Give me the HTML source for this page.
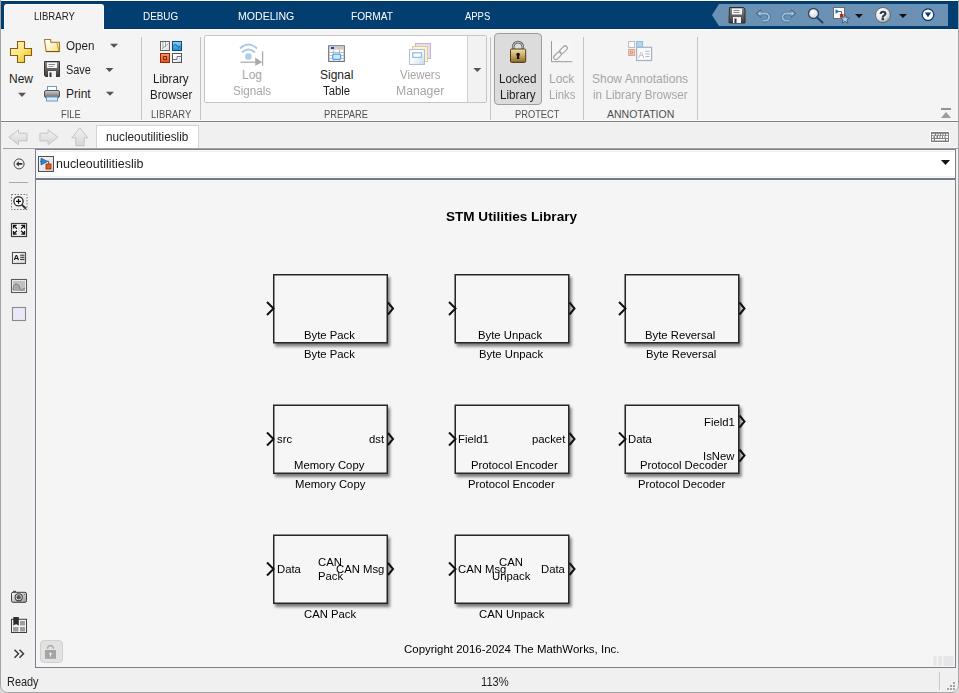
<!DOCTYPE html>
<html><head><meta charset="utf-8">
<style>
*{margin:0;padding:0;box-sizing:border-box}
html,body{width:959px;height:693px;overflow:hidden;background:#f0f0f0;font-family:"Liberation Sans",sans-serif}
.a{position:absolute}
.t{position:absolute;white-space:nowrap;line-height:1;transform-origin:0 0}
.tab{color:#fff;font-size:11px}
.rb{font-size:12px;color:#1e1e1e}
.dis{color:#a6a6a6}
.grp{font-size:10.5px;color:#505050}
.sep{position:absolute;width:1px;background:#c4c4c4;top:37px;height:84px}
svg{position:absolute;overflow:visible}
</style></head><body>
<!-- window top strip -->
<div class="a" style="left:0;top:0;width:959px;height:1px;background:#fbfaf4"></div>
<!-- blue header -->
<div class="a" style="left:1px;top:1px;width:957px;height:28px;background:#023f70;border-top:1px solid #013468;border-bottom:1px solid #013468"></div>
<div class="a" style="left:1px;top:29px;width:957px;height:1px;background:#fdfdfd"></div>
<!-- LIBRARY tab -->
<div class="a" style="left:4px;top:4px;width:100px;height:27px;background:#f4f4f4;border:1px solid #fdfdfd;border-bottom:none;border-radius:3px 3px 0 0"></div>
<div class="t tab" style="left:34px;top:11px;color:#222;transform:scaleX(0.87)">LIBRARY</div>
<div class="t tab" style="left:143px;top:11px;transform:scaleX(0.9)">DEBUG</div>
<div class="t tab" style="left:238px;top:11px;transform:scaleX(0.96)">MODELING</div>
<div class="t tab" style="left:351px;top:11px;transform:scaleX(0.92)">FORMAT</div>
<div class="t tab" style="left:465px;top:11px;transform:scaleX(0.86)">APPS</div>
<!-- QAT -->
<svg style="left:0;top:0" width="959" height="30">
<polygon points="712,15 719,4 948,4 948,26 719,26" fill="#6b91b4"/>
</svg>

<!-- ribbon body -->
<div class="a" style="left:1px;top:30px;width:957px;height:91px;background:#f4f4f4"></div>
<div class="a" style="left:1px;top:121px;width:957px;height:1px;background:#808080"></div>
<div class="sep" style="left:141px"></div>
<div class="sep" style="left:200px"></div>
<div class="sep" style="left:490px"></div>
<div class="sep" style="left:583px"></div>
<div class="sep" style="left:697px"></div>

<!-- FILE -->
<div class="t rb" style="left:9px;top:73px">New</div>
<div class="t rb" style="left:66px;top:40px;transform:scaleX(0.97)">Open</div>
<div class="t rb" style="left:66px;top:64px;transform:scaleX(0.91)">Save</div>
<div class="t rb" style="left:66px;top:88px">Print</div>
<div class="t grp" style="left:61px;top:109px;transform:scaleX(0.89)">FILE</div>
<!-- LIBRARY -->
<div class="t rb" style="left:153px;top:73px;transform:scaleX(0.97)">Library</div>
<div class="t rb" style="left:150px;top:89px;transform:scaleX(0.96)">Browser</div>
<div class="t grp" style="left:151px;top:109px;transform:scaleX(0.9)">LIBRARY</div>
<!-- PREPARE gallery -->
<div class="a" style="left:204px;top:35px;width:283px;height:68px;background:#fff;border:1px solid #c6c6c6;border-radius:2px"></div>
<div class="a" style="left:467px;top:36px;width:19px;height:66px;background:#f2f2f2;border-left:1px solid #d0d0d0"></div>
<div class="t rb dis" style="left:242px;top:69px">Log</div>
<div class="t rb dis" style="left:233px;top:85px;transform:scaleX(0.97)">Signals</div>
<div class="t rb" style="left:320px;top:69px">Signal</div>
<div class="t rb" style="left:323px;top:85px;transform:scaleX(0.94)">Table</div>
<div class="t rb dis" style="left:400px;top:69px;transform:scaleX(0.95)">Viewers</div>
<div class="t rb dis" style="left:396px;top:85px;transform:scaleX(1.02)">Manager</div>
<div class="t grp" style="left:324px;top:109px;transform:scaleX(0.89)">PREPARE</div>
<!-- PROTECT -->
<div class="a" style="left:494px;top:33px;width:48px;height:72px;background:#dcdcdc;border:1px solid #9e9e9e;border-radius:4px"></div>
<div class="t rb" style="left:499px;top:73px;transform:scaleX(0.97)">Locked</div>
<div class="t rb" style="left:500px;top:89px;transform:scaleX(0.97)">Library</div>
<div class="t rb dis" style="left:549px;top:73px">Lock</div>
<div class="t rb dis" style="left:549px;top:89px;transform:scaleX(0.94)">Links</div>
<div class="t grp" style="left:515px;top:109px;transform:scaleX(0.885)">PROTECT</div>
<!-- ANNOTATION -->
<div class="t rb dis" style="left:592px;top:73px">Show Annotations</div>
<div class="t rb dis" style="left:593px;top:89px;transform:scaleX(0.98)">in Library Browser</div>
<div class="t grp" style="left:607px;top:109px">ANNOTATION</div>

<!-- tab strip -->
<div class="a" style="left:1px;top:122px;width:957px;height:26px;background:#f0f0f0"></div>
<div class="a" style="left:1px;top:122px;width:957px;height:1px;background:#f7f7f7"></div>
<div class="a" style="left:1px;top:120px;width:957px;height:1px;background:#fbfbfb"></div>
<div class="a" style="left:1px;top:147px;width:957px;height:1px;background:#f5f5f5"></div>
<div class="a" style="left:96px;top:125px;width:103px;height:24px;background:#fff;border:1px solid #d4d4d4;border-bottom:none"></div>
<div class="t rb" style="left:106px;top:131px;color:#222;transform:scaleX(0.98)">nucleoutilitieslib</div>
<div class="a" style="left:3px;top:148px;width:955px;height:1px;background:#a0a0a0"></div>

<!-- address bar -->
<div class="a" style="left:35px;top:149px;width:921px;height:1px;background:#7a808c"></div>
<div class="a" style="left:36px;top:150px;width:919px;height:28px;background:#fff;border-top:1px solid #f9f9f9;border-left:1px solid #f9f9f9"></div>
<div class="a" style="left:37px;top:151px;width:917px;height:1px;background:#f0f0f0"></div>
<div class="a" style="left:37px;top:151px;width:1px;height:26px;background:#f0f0f0"></div>
<div class="a" style="left:37px;top:176px;width:917px;height:1px;background:#f0f0f0"></div>
<div class="a" style="left:37px;top:177px;width:917px;height:1px;background:#f8f8f8"></div>
<div class="a" style="left:36px;top:178px;width:919px;height:2px;background:#737a88"></div>
<div class="t rb" style="left:56px;top:158px;color:#222;transform:scaleX(1.04)">nucleoutilitieslib</div>

<!-- palette -->
<div class="a" style="left:35px;top:149px;width:1px;height:519px;background:#7a808c"></div>
<!-- canvas -->
<div class="a" style="left:36px;top:180px;width:919px;height:487px;background:#f5f5f5"></div>
<div class="a" style="left:955px;top:149px;width:1px;height:519px;background:#7a808c"></div>
<div class="a" style="left:35px;top:667px;width:921px;height:1px;background:#7a808c"></div>


<svg style="left:0;top:0" width="959" height="693">
<defs>
<filter id="sh" x="-10%" y="-10%" width="130%" height="140%">
<feGaussianBlur in="SourceAlpha" stdDeviation="1.7"/>
<feOffset dx="2.2" dy="2.8" result="o"/>
<feComponentTransfer><feFuncA type="linear" slope="0.5"/></feComponentTransfer>
<feMerge><feMergeNode/><feMergeNode in="SourceGraphic"/></feMerge>
</filter>
</defs>
<g fill="#f6f6f6" stroke="#262626" stroke-width="1.5" filter="url(#sh)">
<rect x="273.75" y="274.75" width="113.5" height="68"/>
<rect x="455.25" y="274.75" width="113.5" height="68"/>
<rect x="625.25" y="274.75" width="113.5" height="68"/>
<rect x="273.75" y="405.25" width="113.5" height="68"/>
<rect x="455.25" y="405.25" width="113.5" height="68"/>
<rect x="625.25" y="405.25" width="113.5" height="68"/>
<rect x="273.75" y="535.25" width="113.5" height="68"/>
<rect x="455.25" y="535.25" width="113.5" height="68"/>
</g>
<g fill="none" stroke="#111" stroke-width="2" stroke-linejoin="miter">
<polyline points="267,302 273.5,308.5 267,315"/>
<polyline points="388.0,302.5 393.0,308.5 388.0,314.5"/>
<polyline points="449,302 455.5,308.5 449,315"/>
<polyline points="569.5,302.5 574.5,308.5 569.5,314.5"/>
<polyline points="619,302 625.5,308.5 619,315"/>
<polyline points="739.5,302.5 744.5,308.5 739.5,314.5"/>
<polyline points="267,432.5 273.5,439 267,445.5"/>
<polyline points="388.0,433.0 393.0,439.0 388.0,445.0"/>
<polyline points="449,432.5 455.5,439 449,445.5"/>
<polyline points="569.5,433.0 574.5,439.0 569.5,445.0"/>
<polyline points="619,432.5 625.5,439 619,445.5"/>
<polyline points="739.5,415.5 744.5,421.5 739.5,427.5"/>
<polyline points="739.5,449.5 744.5,455.5 739.5,461.5"/>
<polyline points="267,562.5 273.5,569 267,575.5"/>
<polyline points="388.0,563.0 393.0,569.0 388.0,575.0"/>
<polyline points="449,562.5 455.5,569 449,575.5"/>
<polyline points="569.5,563.0 574.5,569.0 569.5,575.0"/>
</g>
</svg>
<div style="position:absolute;left:0;top:0;width:959px;height:693px;font-size:11.3px;color:#000;will-change:transform">
<div class="t" style="left:446px;top:210px;font-size:13.56px;font-weight:bold;color:#000">STM Utilities Library</div>
<div class="t" style="left:304px;top:330px">Byte Pack</div>
<div class="t" style="left:304px;top:349px">Byte Pack</div>
<div class="t" style="left:478px;top:330px">Byte Unpack</div>
<div class="t" style="left:479px;top:349px">Byte Unpack</div>
<div class="t" style="left:645px;top:330px">Byte Reversal</div>
<div class="t" style="left:646px;top:349px">Byte Reversal</div>

<div class="t" style="left:277px;top:434px">src</div>
<div class="t" style="left:369px;top:434px">dst</div>
<div class="t" style="left:294px;top:460px">Memory Copy</div>
<div class="t" style="left:295px;top:479px">Memory Copy</div>
<div class="t" style="left:458px;top:434px">Field1</div>
<div class="t" style="left:532px;top:434px">packet</div>
<div class="t" style="left:471px;top:460px">Protocol Encoder</div>
<div class="t" style="left:468px;top:479px">Protocol Encoder</div>
<div class="t" style="left:628px;top:434px">Data</div>
<div class="t" style="left:704px;top:417px">Field1</div>
<div class="t" style="left:703px;top:451px">IsNew</div>
<div class="t" style="left:640px;top:460px">Protocol Decoder</div>
<div class="t" style="left:638px;top:479px">Protocol Decoder</div>

<div class="t" style="left:277px;top:564px">Data</div>
<div class="t" style="left:318px;top:557px">CAN</div>
<div class="t" style="left:318px;top:571px">Pack</div>
<div class="t" style="left:336px;top:564px">CAN Msg</div>
<div class="t" style="left:304px;top:609px">CAN Pack</div>
<div class="t" style="left:458px;top:564px">CAN Msg</div>
<div class="t" style="left:499px;top:557px">CAN</div>
<div class="t" style="left:492px;top:571px">Unpack</div>
<div class="t" style="left:541px;top:564px">Data</div>
<div class="t" style="left:479px;top:609px">CAN Unpack</div>

<div class="t" style="left:404px;top:644px;transform:scaleX(1.014)">Copyright 2016-2024 The MathWorks, Inc.</div>
</div>


<!-- ===== ICONS ===== -->
<svg style="left:0;top:0" width="959" height="693">
<defs>
<linearGradient id="gPlus" x1="0" y1="0" x2="1" y2="1"><stop offset="0" stop-color="#fffbe0"/><stop offset="0.5" stop-color="#fde676"/><stop offset="1" stop-color="#e8b420"/></linearGradient>
<linearGradient id="gFold" x1="0" y1="0" x2="1" y2="1"><stop offset="0.2" stop-color="#ffffff"/><stop offset="1" stop-color="#f6e070"/></linearGradient>
<linearGradient id="gDisk" x1="0" y1="0" x2="0" y2="1"><stop offset="0" stop-color="#8a8a8a"/><stop offset="1" stop-color="#3a3a3a"/></linearGradient>
<linearGradient id="gPrn" x1="0" y1="0" x2="0" y2="1"><stop offset="0" stop-color="#d0d0d0"/><stop offset="1" stop-color="#6a6a6a"/></linearGradient>
<linearGradient id="gBlue" x1="0" y1="0" x2="0" y2="1"><stop offset="0" stop-color="#8fd4f4"/><stop offset="1" stop-color="#1e88c8"/></linearGradient>
<linearGradient id="gOra" x1="0" y1="0" x2="0" y2="1"><stop offset="0" stop-color="#f29a6a"/><stop offset="1" stop-color="#e2501a"/></linearGradient>
<linearGradient id="gWh" x1="0" y1="0" x2="1" y2="1"><stop offset="0.4" stop-color="#ffffff"/><stop offset="1" stop-color="#c8d8e8"/></linearGradient>
<linearGradient id="gGold" x1="0" y1="0" x2="0" y2="1"><stop offset="0" stop-color="#efe0b0"/><stop offset="0.5" stop-color="#c8a860"/><stop offset="1" stop-color="#8a6a28"/></linearGradient>
<linearGradient id="gArr" x1="0" y1="0" x2="0" y2="1"><stop offset="0" stop-color="#f2f2f2"/><stop offset="1" stop-color="#d6d6d6"/></linearGradient>
<radialGradient id="gHelp" cx="0.35" cy="0.3" r="0.8"><stop offset="0" stop-color="#ffffff"/><stop offset="0.6" stop-color="#e6e6e6"/><stop offset="1" stop-color="#9a9a9a"/></radialGradient>
<radialGradient id="gMag" cx="0.4" cy="0.35" r="0.7"><stop offset="0" stop-color="#ffffff"/><stop offset="1" stop-color="#c8d4de"/></radialGradient>
<linearGradient id="gLib" x1="0" y1="0" x2="1" y2="1"><stop offset="0" stop-color="#ffffff"/><stop offset="1" stop-color="#d4d4d4"/></linearGradient>
</defs>

<!-- QAT icons -->
<g>
<path d="M729.5,7.5 h14 l1.5,1.5 v14 h-15.5 l-0.5,-0.5 z" fill="url(#gDisk)" stroke="#2e2e2e" stroke-width="1"/>
<rect x="732" y="8.5" width="10" height="6" fill="#f4f4f4"/>
<rect x="733.5" y="10" width="6" height="1" fill="#888"/><rect x="733.5" y="12" width="6" height="1" fill="#888"/>
<rect x="733" y="17" width="8" height="6" fill="#f2f2f2"/><rect x="734.5" y="18.5" width="2" height="4.5" fill="#333"/>
</g>
<g fill="none" stroke-linecap="butt">
<path d="M759,13.5 h6.5 a3.6,3.6 0 0 1 0,7.2 h-3" stroke="#4a6f92" stroke-width="3.4"/>
<path d="M792.5,13.5 h-6.5 a3.6,3.6 0 0 0 0,7.2 h3" stroke="#4a6f92" stroke-width="3.4"/>
<path d="M756.5,13.5 l4.2,-3.6 v7.2 z M795.5,13.5 l-4.2,-3.6 v7.2 z" fill="#4a6f92" stroke="#4a6f92" stroke-width="1.2" stroke-linejoin="round"/>
<path d="M759,13.5 h6.5 a3.6,3.6 0 0 1 0,7.2 h-3" stroke="#9cc0dc" stroke-width="1.8"/>
<path d="M792.5,13.5 h-6.5 a3.6,3.6 0 0 0 0,7.2 h3" stroke="#9cc0dc" stroke-width="1.8"/>
<path d="M757.5,13.5 l3,-2.6 v5.2 z M794.5,13.5 l-3,-2.6 v5.2 z" fill="#a8c8e2"/>
</g>
<g>
<circle cx="813.5" cy="13.5" r="5" fill="url(#gMag)" stroke="#3a4a58" stroke-width="1.4"/>
<path d="M817,17.5 l5.5,5" stroke="#27476a" stroke-width="2.2" stroke-linecap="round"/>
</g>
<g>
<rect x="833.5" y="7.5" width="11" height="11" fill="#fbfbfb" stroke="#6c6c6c" stroke-width="1"/>
<path d="M839,11.5 h2.5 v3" stroke="#333" stroke-width="0.8" fill="none"/>
<path d="M835.5,9.2 l4,2.3 l-4,2.3 z" fill="#1a6ec8"/>
<rect x="840" y="14" width="3.5" height="3.5" fill="#c02a0a"/>
<path d="M845,14.8 l1.3,3 l3.2,0.2 l-2.5,2 l0.9,3.1 l-2.9,-1.7 l-2.9,1.7 l0.9,-3.1 l-2.5,-2 l3.2,-0.2 z" fill="#a8cce8" stroke="#3e5a78" stroke-width="0.9"/>
</g>
<path d="M855,14 h8 l-4,4 z" fill="#111"/>
<g>
<circle cx="883" cy="15" r="7.5" fill="url(#gHelp)" stroke="#4a5a6a" stroke-width="0.8"/>
<text x="883" y="19.6" font-family="Liberation Sans" font-weight="bold" font-size="12.5" text-anchor="middle" fill="#1c2c46" stroke="#1c2c46" stroke-width="0.5">?</text>
</g>
<path d="M899,14 h8 l-4,4 z" fill="#111"/>
<g>
<circle cx="928" cy="14.7" r="5.8" fill="#fff" stroke="#0c3e6e" stroke-width="1.3"/>
<path d="M924.8,12.6 h6.4 l-3.2,4.6 z" fill="#0c3e6e"/>
</g>

<!-- New plus -->
<path d="M17.5,41.5 h7 v7 h7 v7 h-7 v7 h-7 v-7 h-7 v-7 h7 z" fill="url(#gPlus)" stroke="#86600e" stroke-width="1.1"/>
<path d="M18,92.8 h8 l-4,4.2 z" fill="#5a5a5a"/>
<!-- folder -->
<path d="M44.5,39.5 h6.2 v2.8 h8.8 v9.2 h-13.4 z" fill="url(#gFold)" stroke="#a87a22" stroke-width="1.1" stroke-linejoin="round"/>
<path d="M51,42.6 h5.8 l2.2,8.6" fill="none" stroke="#c09040" stroke-width="0.9"/>
<path d="M46,51.6 h13.4" stroke="#6e5010" stroke-width="1"/>
<!-- save -->
<path d="M44.5,61.5 h15 v15 h-14 l-1,-1 z" fill="url(#gDisk)" stroke="#333" stroke-width="1"/>
<rect x="47" y="62.5" width="10" height="5.5" fill="#f6f6f6"/>
<rect x="48.5" y="64" width="6.5" height="1" fill="#8a8a8a"/><rect x="48.5" y="66" width="5" height="0.8" fill="#8a8a8a"/>
<rect x="48" y="71" width="8" height="6" fill="#f0f0f0"/><rect x="49.5" y="72.5" width="2" height="4.5" fill="#333"/>
<!-- print -->
<rect x="47.5" y="86.5" width="9" height="4" fill="#fff" stroke="#6a9ac8" stroke-width="1"/>
<rect x="44.5" y="90.5" width="15" height="7" rx="1.5" fill="url(#gPrn)" stroke="#555" stroke-width="1"/>
<rect x="46.5" y="97" width="11" height="4" fill="#d8ecf8" stroke="#6a9ac8" stroke-width="1"/>
<!-- small arrows -->
<path d="M110,43.8 h8 l-4,4 z" fill="#555"/>
<path d="M105.5,68 h8 l-4,4 z" fill="#555"/>
<path d="M106,91.7 h8 l-4,4 z" fill="#555"/>

<!-- Library browser -->
<rect x="160.5" y="41.5" width="9" height="9" fill="url(#gWh)" stroke="#666" stroke-width="1"/>
<path d="M162,49 l6.5,-5.5 M163,42 v6 M165.5,42 v4.5" stroke="#888" stroke-width="0.8" fill="none"/>
<rect x="172.5" y="41.5" width="9" height="9" fill="url(#gBlue)" stroke="#0a4a8a" stroke-width="1"/>
<path d="M173.5,46 q2,-3 3.5,0 t3.5,0" stroke="#0a5a9a" stroke-width="1" fill="none"/>
<rect x="160.5" y="53.5" width="9" height="9" fill="url(#gOra)" stroke="#8a2a08" stroke-width="1"/>
<rect x="163.5" y="56.5" width="3" height="3" fill="none" stroke="#8a2a08" stroke-width="1"/>
<rect x="172.5" y="53.5" width="9" height="9" fill="url(#gWh)" stroke="#555" stroke-width="1"/>
<path d="M173,59.5 h4 v-3 h4.5" stroke="#777" stroke-width="1" fill="none"/>

<!-- Log signals -->
<g fill="none" stroke="#a9c9e6" stroke-width="1.8" stroke-linecap="round">
<path d="M240.5,48 q8,-7 16,0"/>
<path d="M242.5,52 q6,-5 12,0"/>
</g>
<circle cx="248.4" cy="56.5" r="3.3" fill="#b0cce6"/>
<path d="M240.5,62.2 h15" stroke="#a8a8a8" stroke-width="1.2"/>
<path d="M255.2,57.4 l7,4.8 l-7,3.6 z" fill="#a8a8a8"/>
<path d="M262.6,51.2 v14.6" stroke="#a8a8a8" stroke-width="1.2"/>

<!-- Signal table -->
<rect x="328.7" y="45.8" width="15.6" height="15.6" fill="#fff" stroke="#6a6a6a" stroke-width="1.1"/>
<rect x="329.3" y="46.4" width="14.4" height="3.2" fill="#c8c8c8"/>
<rect x="331" y="47" width="3" height="2" fill="#0a50b0"/>
<path d="M329,52.4 h15 M329,55.4 h15 M329,58.4 h15" stroke="#aaa" stroke-width="0.8"/>
<path d="M333.4,49.6 v11.5 M339.5,49.6 v11.5" stroke="#aaa" stroke-width="0.8"/>
<rect x="332.8" y="54.2" width="7.8" height="5.2" rx="1" fill="#d4e8fc" stroke="#4aa0ff" stroke-width="1.2"/>

<!-- Viewers manager -->
<rect x="415.5" y="43.5" width="15" height="15" fill="#e6def0" stroke="#c4b4dc" stroke-width="1"/>
<rect x="412.5" y="46.5" width="15" height="15" fill="#fdf1d0" stroke="#e4cc9c" stroke-width="1"/>
<rect x="409.5" y="49.5" width="15" height="15" fill="url(#gWh)" stroke="#a8c0d8" stroke-width="1"/>
<rect x="412.8" y="52.8" width="8.6" height="4.6" fill="#fff" stroke="#8ec0e8" stroke-width="1.3"/>
<path d="M473.3,68 h8 l-4,4 z" fill="#555"/>

<!-- Lock -->
<path d="M513.2,49.5 v-2.6 a4.8,4.8 0 0 1 9.6,0 v2.6" fill="none" stroke="#5e5e5e" stroke-width="2.6"/>
<path d="M513.2,49.5 v-2.6 a4.8,4.8 0 0 1 9.6,0 v2.6" fill="none" stroke="#e4e4e4" stroke-width="0.8"/>
<rect x="510.5" y="49" width="15.2" height="13.4" rx="1.2" fill="url(#gGold)" stroke="#4e3a10" stroke-width="1"/>
<circle cx="518.1" cy="54.6" r="1.8" fill="#111"/>
<path d="M517.2,55 h1.8 l0.4,4 h-2.6 z" fill="#111"/>
<!-- link -->
<rect x="552" y="41.5" width="20" height="20" fill="#f6f6f6"/>
<path d="M551.5,41.2 v20.5 h20.8" fill="none" stroke="#9a9a9a" stroke-width="1"/>
<g fill="none" stroke="#a8a8a8" stroke-width="1.2">
<rect x="553" y="53.5" width="9" height="4.4" rx="2.2" transform="rotate(-45 557.5 55.7)"/>
<rect x="559" y="47.5" width="9" height="4.4" rx="2.2" transform="rotate(-45 563.5 49.7)"/>
</g>

<!-- Annotation icon -->
<rect x="628.6" y="41.5" width="6" height="6" fill="#fafafa" stroke="#bcbcbc" stroke-width="1"/>
<rect x="636.6" y="41.5" width="6" height="6" fill="#aad8ee" stroke="#8ebedc" stroke-width="1"/>
<rect x="628.6" y="49.5" width="6" height="6" fill="#f4c4b0" stroke="#d8a890" stroke-width="1"/>
<rect x="630.6" y="51.5" width="2" height="2" fill="none" stroke="#d09880" stroke-width="0.8"/>
<rect x="636.6" y="47.3" width="15" height="13.2" fill="#fbfbfb" stroke="#a4b0c4" stroke-width="1.2"/>
<text x="638.3" y="57.5" font-family="Liberation Sans" font-size="9" fill="#b8a0b8">A</text>
<path d="M645.5,51.3 h4 M645.5,54 h4 M645.5,56.6 h4" stroke="#a8b4c8" stroke-width="1"/>

<!-- collapse ribbon -->
<rect x="941" y="108" width="10" height="2" fill="#949494"/>
<path d="M941,118 l5,-6 l5,6 z" fill="#9c9c9c"/>

<!-- nav arrows -->
<path d="M8.9,137.1 l9.6,-7.3 v3.4 h8.5 v7.7 h-8.5 v3.9 z" fill="url(#gArr)" stroke="#c4c4c4" stroke-width="1"/>
<path d="M57.9,137.1 l-9.8,-7.3 v3.4 h-8.2 v7.7 h8.2 v3.9 z" fill="url(#gArr)" stroke="#c4c4c4" stroke-width="1"/>
<path d="M79.8,127.9 l8.2,10 h-3.8 v7.9 h-8.4 v-7.9 h-4.1 z" fill="url(#gArr)" stroke="#c4c4c4" stroke-width="1"/>
<!-- keyboard -->
<rect x="930" y="131" width="20" height="12" fill="#fff"/>
<rect x="931" y="132" width="18" height="10" fill="#7e7e7e"/>
<g fill="#fbfbfb">
<rect x="932" y="133.8" width="2.8" height="1.5"/><rect x="936" y="133.8" width="1.5" height="1.5"/><rect x="938.5" y="133.8" width="1.5" height="1.5"/><rect x="941" y="133.8" width="1.5" height="1.5"/><rect x="943.5" y="133.8" width="1.5" height="1.5"/><rect x="946" y="133.8" width="2" height="1.5"/>
<rect x="932" y="136" width="1.5" height="2"/><rect x="935" y="136" width="1.5" height="2"/><rect x="938" y="136" width="1.5" height="2"/><rect x="940.5" y="136" width="1.5" height="2"/><rect x="943" y="136" width="1.5" height="2"/><rect x="945.5" y="136" width="2.5" height="2"/>
<rect x="932" y="139" width="2" height="1.5"/><rect x="935" y="139" width="10" height="1.5"/><rect x="946" y="139" width="2" height="1.5"/>
</g>
<!-- address dropdown -->
<path d="M941,160 h9 l-4.5,5 z" fill="#111"/>

<!-- address library icon -->
<rect x="38.5" y="156.5" width="15" height="15" fill="url(#gLib)" stroke="#505050" stroke-width="1"/>
<path d="M40,161.3 h1.5 M47,161.3 h1.7 v3" stroke="#444" stroke-width="0.9" fill="none"/>
<path d="M41,158 l6.5,3.4 l-6.5,3.6 z" fill="#2a88d0" stroke="#1858a0" stroke-width="0.7"/>
<rect x="46" y="164" width="5" height="5" fill="#e45a20" stroke="#8a2a08" stroke-width="0.8"/>

<!-- palette -->
<circle cx="19.1" cy="163.9" r="5" fill="none" stroke="#444" stroke-width="1"/>
<path d="M16,163.9 l2.8,-2.6 v1.8 h3.6 v1.6 h-3.6 v1.8 z" fill="#333"/>
<path d="M9,182.5 h19" stroke="#a8a8a8" stroke-width="1"/>
<rect x="11.5" y="194.5" width="15.5" height="15" fill="none" stroke="#555" stroke-width="0.8" stroke-dasharray="1.5 1.5"/>
<circle cx="18.5" cy="201.3" r="4.6" fill="#fff" stroke="#333" stroke-width="1.4"/>
<path d="M21.8,204.6 l4.2,4.2" stroke="#333" stroke-width="2"/>
<path d="M16,201.3 h5 M18.5,198.8 v5" stroke="#000" stroke-width="1.2"/>
<rect x="11.5" y="223.5" width="15" height="13" fill="#fafafa" stroke="#3c3c3c" stroke-width="1.2"/>
<rect x="18" y="224.5" width="2.5" height="11" fill="#e6e6e6"/>
<path d="M13.5,228.6 v-3.2 h3.2 M13.5,225.4 l3.4,3.4 M24.5,228.6 v-3.2 h-3.2 M24.5,225.4 l-3.4,3.4 M13.5,231 v3.2 h3.2 M13.5,234.2 l3.4,-3.4 M24.5,231 v3.2 h-3.2 M24.5,234.2 l-3.4,-3.4" stroke="#141414" stroke-width="1.3" fill="none"/>
<rect x="12.5" y="252.5" width="13" height="11" fill="url(#gLib)" stroke="#505050" stroke-width="1.1"/>
<text x="13.4" y="260.2" font-family="Liberation Sans" font-weight="bold" font-size="8" fill="#111">A</text>
<path d="M20.2,255.2 h4.2 M20.2,257.3 h4.2 M20.2,259.4 h4.2" stroke="#2a2a2a" stroke-width="1"/>
<rect x="11.5" y="279.5" width="15" height="13" fill="#f4f4f4" stroke="#5a5a5a" stroke-width="1.1"/>
<rect x="13" y="281" width="12" height="10" fill="#c0c0c0"/>
<path d="M13,290 q0,-6 3.3,-6 q3,0 4,5 q0.8,2.5 2,1 q1,-2 2.7,-2 v2.8 h-12 z" fill="#a8a8a8"/>
<path d="M13,290 q0,-6 3.3,-6 q3,0 4,5 q0.8,2.5 2,1 q1,-2 2.7,-2" fill="none" stroke="#777" stroke-width="0.9"/>
<rect x="12.5" y="307.5" width="13" height="13" fill="#e8e8f8" stroke="#8a8a8a" stroke-width="1.1"/>
<!-- camera -->
<defs><linearGradient id="gCam" x1="0" y1="0" x2="1" y2="1"><stop offset="0" stop-color="#fafafa"/><stop offset="1" stop-color="#9a9a9a"/></linearGradient></defs>
<rect x="13" y="590.8" width="3" height="1.6" fill="#555"/>
<rect x="11.5" y="592.3" width="15" height="10" rx="1.5" fill="url(#gCam)" stroke="#3e3e3e" stroke-width="1"/>
<circle cx="18.7" cy="597.3" r="3.6" fill="#e8e8e8" stroke="#3a3a3a" stroke-width="1.1"/>
<circle cx="18.7" cy="597.3" r="2.2" fill="#555"/>
<circle cx="24.3" cy="594.5" r="0.6" fill="#555"/>
<!-- property icon -->
<rect x="11.5" y="619.3" width="15" height="13.2" fill="#f4f4f4" stroke="#3e3e3e" stroke-width="1"/>
<rect x="20" y="621" width="5" height="4.5" fill="#9e9e9e"/><rect x="20" y="627" width="5" height="4.5" fill="#9e9e9e"/>
<rect x="13" y="627" width="5.5" height="4.5" fill="#9e9e9e"/>
<path d="M13.3,617 h5.5 v8.8 q-2.75,-3 -5.5,0 z" fill="#2e2e2e"/>
<path d="M14.5,649.8 l4,4 l-4,4 M19.5,649.8 l4,4 l-4,4" stroke="#3a3a3a" stroke-width="1.5" fill="none"/>
<!-- lock button canvas -->
<rect x="40.5" y="640.5" width="22" height="22" rx="3.5" fill="#e2e2e2" stroke="#d0d0d0" stroke-width="1"/>
<path d="M47.6,648.8 v-0.3 a2.9,2.9 0 0 1 5.8,0 v0.3" fill="none" stroke="#a2a2a2" stroke-width="1.2"/>
<rect x="45" y="650" width="11" height="8.8" fill="#a4a4a4"/>
<circle cx="50.5" cy="653.8" r="1.2" fill="#f0f0f0"/><rect x="50" y="654" width="1" height="2.8" fill="#f0f0f0"/>
<!-- scroll corner -->
<rect x="933.5" y="656" width="3" height="10" fill="#e6e6e6"/><rect x="938.5" y="656" width="3.5" height="10" fill="#e6e6e6"/><rect x="943.5" y="656" width="10" height="10" fill="#e6e6e6"/>
<!-- grip -->
<g fill="#a4a4a4"><rect x="953" y="682" width="2" height="2"/><rect x="950" y="685" width="2" height="2"/><rect x="953" y="685" width="2" height="2"/><rect x="947" y="688" width="2" height="2"/><rect x="950" y="688" width="2" height="2"/><rect x="953" y="688" width="2" height="2"/></g>
<path d="M939.5,672 v18" stroke="#c8c8c8" stroke-width="1"/>
</svg>

<svg style="left:0;top:0" width="959" height="693">
<path d="M0,686 v7 h7 a7,7 0 0 1 -7,-7 z M959,686 v7 h-7 a7,7 0 0 0 7,-7 z" fill="#d8d8d8"/>
<path d="M0.5,0 V685.5 a7,7 0 0 0 7,7 H951.5 a7,7 0 0 0 7,-7 V0" fill="none" stroke="#a4a4a4" stroke-width="1"/>
</svg>
<!-- status bar -->
<div class="t rb" style="left:7px;top:676px;transform:scaleX(0.91)">Ready</div>
<div class="t rb" style="left:481px;top:676px;transform:scaleX(0.93)">113%</div>
</body></html>
